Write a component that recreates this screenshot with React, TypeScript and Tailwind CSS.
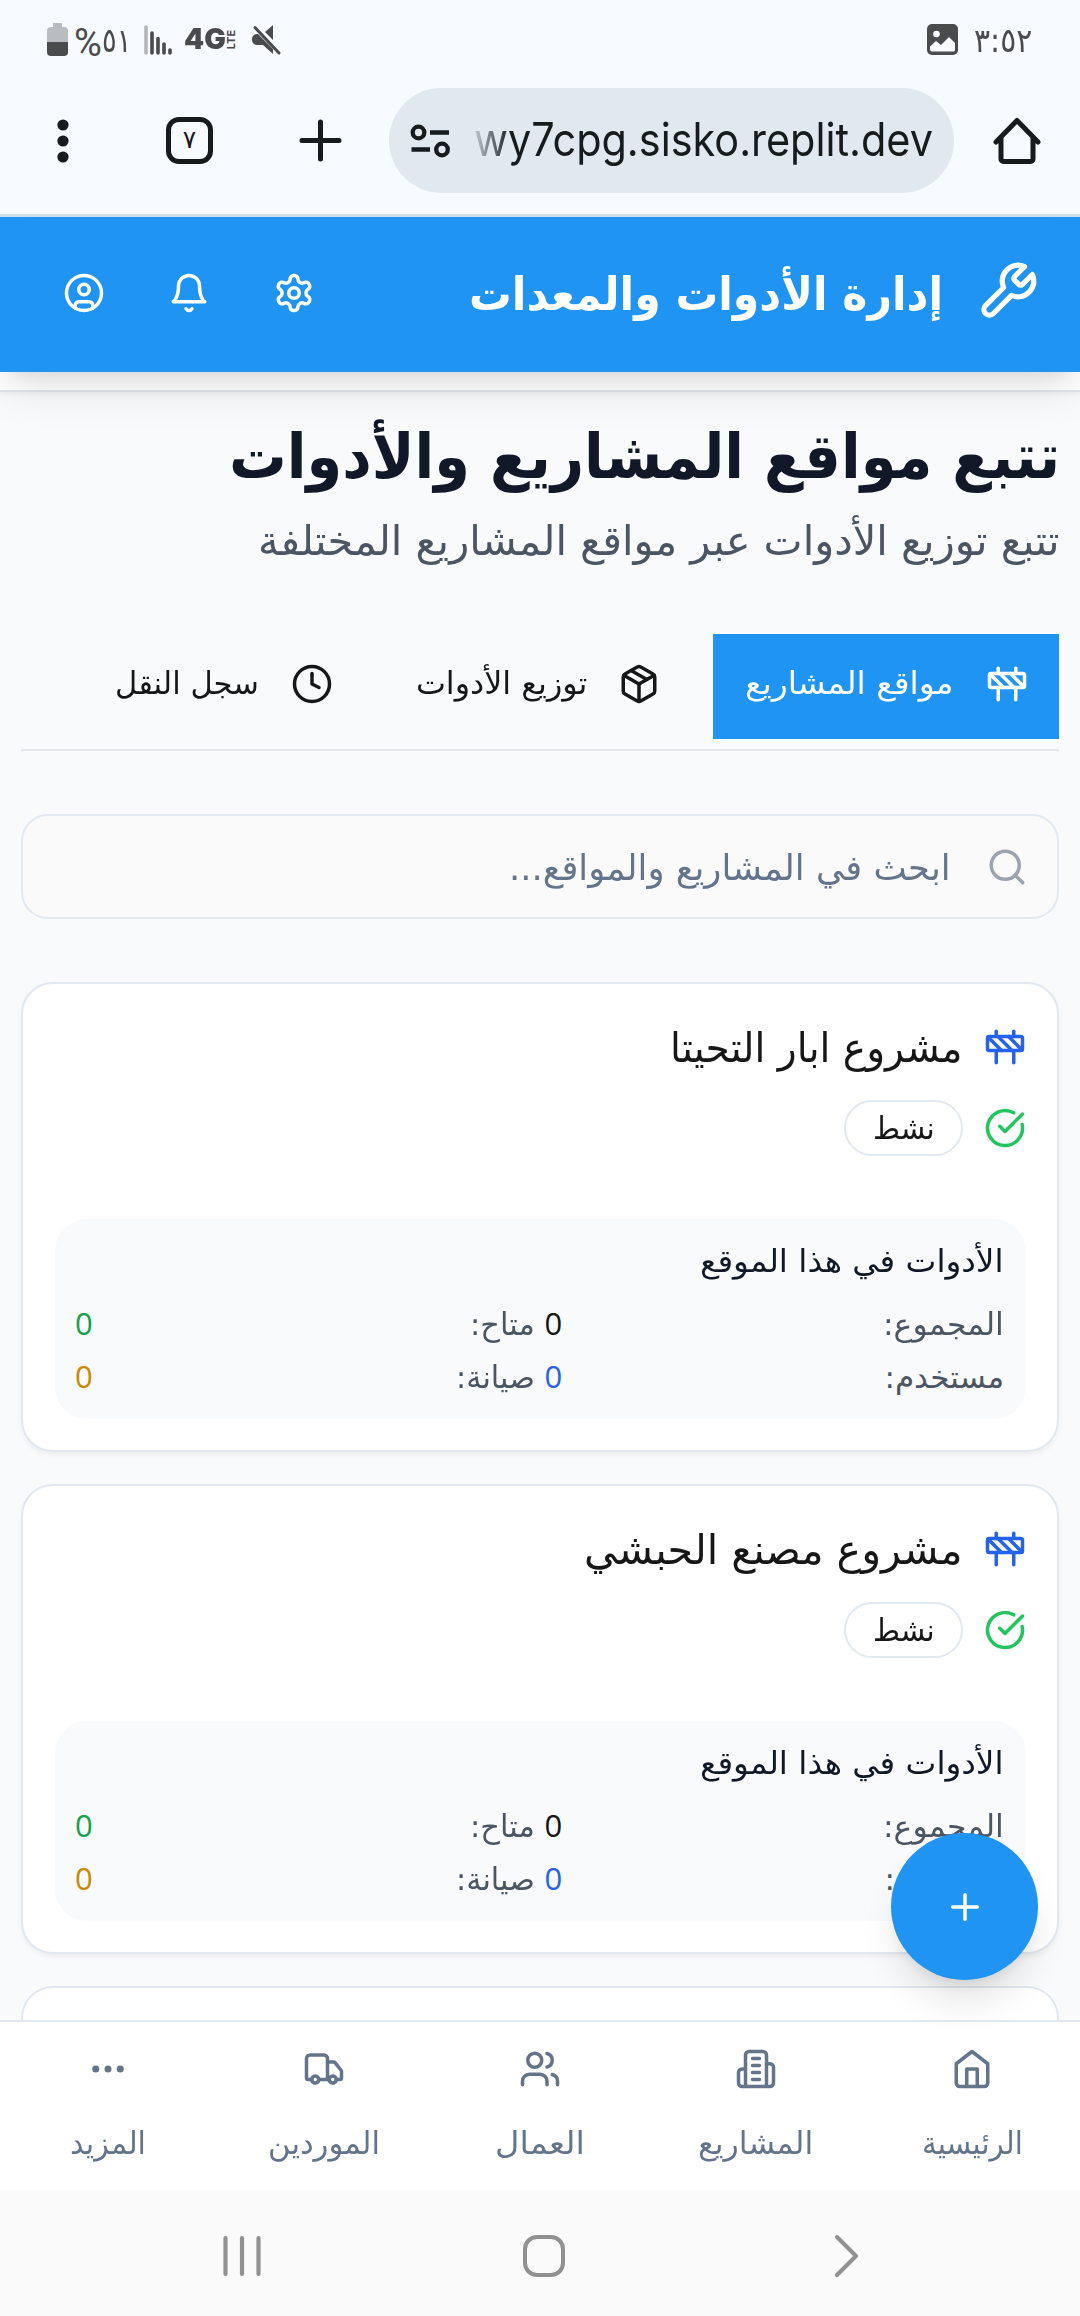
import { useLayoutEffect, useRef, useState } from "react";
import type { ReactNode } from "react";
import { CircleCheckBig, CircleUser, Clock, Construction, Ellipsis, Package, Plus, Search, Truck, Users } from "lucide-react";

/** Single-line label whose text is condensed or widened to fill the box given by className. */
function Fit({ className, children, origin = "origin-right" }: { className: string; children: ReactNode; origin?: string }) {
  const box = useRef<HTMLSpanElement>(null);
  const text = useRef<HTMLSpanElement>(null);
  const [scale, setScale] = useState(1);
  useLayoutEffect(() => {
    if (box.current && text.current) {
      setScale(box.current.clientWidth / text.current.offsetWidth);
    }
  }, []);
  return (
    <span ref={box} className={`flex shrink-0 justify-start leading-none ${className}`}>
      <span ref={text} className={`inline-block shrink-0 whitespace-nowrap ${origin}`} style={{ transform: `scaleX(${scale})` }}>
        {children}
      </span>
    </span>
  );
}

function Svg({ children, className, box = "0 0 24 24", width = 2 }: { children: ReactNode; className: string; box?: string; width?: number }) {
  return (
    <svg viewBox={box} className={className} fill="none" stroke="currentColor" strokeWidth={width} strokeLinecap="round" strokeLinejoin="round">
      {children}
    </svg>
  );
}

function StatusBar() {
  return (
    <div dir="ltr" className="flex h-[74px] items-start pl-[47px] pr-[48px] pt-[23px] text-[#4a4b4d]">
      <svg viewBox="0 0 21 33" className="h-[33px] w-[21px]">
        <path d="M6 0h9v4h2a4 4 0 0 1 4 4v11H0V8a4 4 0 0 1 4-4h2z" fill="#b9bdc2" />
        <path d="M0 19h21v10a4 4 0 0 1-4 4H4a4 4 0 0 1-4-4z" fill="#4a4b4d" />
      </svg>
      <Fit origin="origin-left" className="ml-[6px] mt-[1px] h-9 w-[28px] font-[Roboto] text-[38px]">%</Fit>
      <Fit origin="origin-left" className="mt-[1px] h-8 w-[29px] text-[33px]">٥١</Fit>
      <svg viewBox="0 0 28 30" className="ml-[13px] mt-[2px] h-[30px] w-7" stroke="#4a4b4d" strokeWidth="3.6" strokeLinecap="round">
        <path d="M2 2v26" stroke="#b3b6ba" />
        <path d="M8 8v20M14 13.500v14.500M20 19v9M26 25v3" />
      </svg>
      <Fit origin="origin-left" className="ml-[12px] mt-[2px] h-8 w-[42px] font-[Inter] text-[28px] font-black">4G</Fit>
      <span className="ml-px mt-[6px] flex h-5 w-[10px] items-center justify-center">
        <span className="-rotate-90 font-[Inter] text-[11px] font-bold leading-none">LTE</span>
      </span>
      <svg viewBox="0 0 30 32" className="ml-[14px] mt-px h-8 w-[30px]" fill="#4a4b4d">
        <path d="M22 1v15l-8-8zM22 30 12 21H6a5 5 0 0 1-5-5v-1a5 5 0 0 1 5-5h1l15 15z" />
        <path d="M4 3.500 28 29" stroke="#4a4b4d" strokeWidth="3" strokeLinecap="round" />
      </svg>
      <div className="flex-1" />
      <svg viewBox="0 0 31 31" className="mt-px h-[31px] w-[31px]">
        <rect width="31" height="31" rx="5" fill="#4a4b4d" />
        <circle cx="9.500" cy="10" r="3.300" fill="#f7faff" />
        <path d="M3 22.500 9 17l5 4 8-8 6 6v7q0 1.500-2 1.500H5q-2 0-2-2z" fill="#f7faff" />
      </svg>
      <Fit origin="origin-left" className="ml-[16px] mt-[1px] h-8 w-[58px] text-[33px]">
        <bdo dir="ltr">٣:٥٢</bdo>
      </Fit>
    </div>
  );
}

function BrowserBar() {
  return (
    <div dir="ltr" className="flex h-[143px] items-start border-b-[3px] border-[#d2e0ea] pl-[42px] pr-[38px] pt-[14px] text-[#171b1e]">
      <div className="flex h-[105px] w-[347px] items-center">
        <svg viewBox="0 0 12 44" className="ml-[15px] h-11 w-3" fill="currentColor">
          <circle cx="6" cy="6" r="5.600" />
          <circle cx="6" cy="22" r="5.600" />
          <circle cx="6" cy="38" r="5.600" />
        </svg>
        <div className="ml-[97px] flex h-[47px] w-[47px] items-start justify-center rounded-[13px] border-[5px] border-current pt-[5px] text-[25px] leading-none">٧</div>
        <Svg box="0 0 43 43" width={5} className="ml-[86px] h-[43px] w-[43px]">
          <path d="M21.500 3v37M3 21.500h37" />
        </Svg>
      </div>
      <div className="flex h-[105px] w-[565px] items-center rounded-full bg-[#e1e8f0] pl-[21px]">
        <svg viewBox="0 0 40 34" className="h-[34px] w-10" fill="none" stroke="currentColor" strokeWidth="4.300">
          <circle cx="8.500" cy="8.500" r="5.800" />
          <circle cx="32" cy="25.500" r="5.800" />
          <path d="M20 8.500h19M1.500 25.500H20" />
        </svg>
        <Fit origin="origin-left" className="ml-[24px] h-[58px] w-[459px] pt-[4px] font-[Inter] text-[46px] mask-[linear-gradient(to_right,rgba(0,0,0,0.15),black_8%)]">wy7cpg.sisko.replit.dev</Fit>
      </div>
      <Svg box="0 0 48 48" width={5} className="ml-[39px] mt-[29px] h-12 w-12">
        <path d="M3 25 24 3.500 45 25M8 21v21a2.500 2.500 0 0 0 2.500 2.500h27A2.500 2.500 0 0 0 40 42V21" />
      </Svg>
    </div>
  );
}

function AppHeader() {
  return (
    <header className="z-10 flex h-[155px] shrink-0 items-start bg-[#2094f3] pr-[41px] text-white shadow-[0_26px_39px_-8px_rgba(0,0,0,0.1),0_10px_16px_-10px_rgba(0,0,0,0.1)]">
      <Svg className="mt-[43px] h-[63px] w-[63px]">
        <path d="M14.700 6.300a1 1 0 0 0 0 1.400l1.600 1.600a1 1 0 0 0 1.400 0l3.770-3.770a6 6 0 0 1-7.940 7.940l-6.910 6.910a2.120 2.120 0 0 1-3-3l6.910-6.910a6 6 0 0 1 7.940-7.940l-3.760 3.760z" />
      </Svg>
      <Fit className="mr-[33px] mt-[54px] h-11 w-[474px] text-[46px] font-bold">إدارة الأدوات والمعدات</Fit>
      <div className="mr-[154px] mt-[55px] flex gap-[63px]">
        <Svg className="h-[42px] w-[42px]">
          <path d="M12.220 2h-.44a2 2 0 0 0-2 2v.18a2 2 0 0 1-1 1.730l-.43.25a2 2 0 0 1-2 0l-.15-.08a2 2 0 0 0-2.730.73l-.22.38a2 2 0 0 0 .73 2.730l.15.1a2 2 0 0 1 1 1.720v.51a2 2 0 0 1-1 1.740l-.15.09a2 2 0 0 0-.73 2.730l.22.38a2 2 0 0 0 2.730.73l.15-.08a2 2 0 0 1 2 0l.43.25a2 2 0 0 1 1 1.730V20a2 2 0 0 0 2 2h.44a2 2 0 0 0 2-2v-.18a2 2 0 0 1 1-1.730l.43-.25a2 2 0 0 1 2 0l.15.08a2 2 0 0 0 2.730-.73l.22-.39a2 2 0 0 0-.73-2.730l-.15-.08a2 2 0 0 1-1-1.740v-.5a2 2 0 0 1 1-1.740l.15-.09a2 2 0 0 0 .73-2.730l-.22-.38a2 2 0 0 0-2.730-.73l-.15.08a2 2 0 0 1-2 0l-.43-.25a2 2 0 0 1-1-1.730V4a2 2 0 0 0-2-2z" />
          <circle cx="12" cy="12" r="3" />
        </Svg>
        <Svg className="h-[42px] w-[42px]">
          <path d="M6 8a6 6 0 0 1 12 0c0 7 3 9 3 9H3s3-2 3-9M10.300 21a1.940 1.940 0 0 0 3.400 0" />
        </Svg>
        <CircleUser className="h-[42px] w-[42px]" />
      </div>
    </header>
  );
}

function Tabs() {
  return (
    <div className="mt-[72px] flex h-[117px] shrink-0 border-b-2 border-[#e5e7eb]">
      <div className="flex h-[105px] w-[346px] items-start bg-[#2094f3] pr-[31px] pt-[29px] text-white">
        <Construction className="h-[42px] w-[42px]" />
        <Fit className="mr-[32px] mt-[5px] h-8 w-[209px] text-[31px]">مواقع المشاريع</Fit>
      </div>
      <div className="flex items-start pr-[53px] pt-[29px] text-[#171717]">
        <Package className="h-[42px] w-[42px]" />
        <Fit className="mr-[31px] mt-[5px] h-8 w-[171px] text-[31px]">توزيع الأدوات</Fit>
      </div>
      <div className="flex items-start pr-[83px] pt-[29px] text-[#171717]">
        <Clock className="h-[42px] w-[42px]" />
        <Fit className="mr-[32px] mt-[5px] h-8 w-[144px] text-[31px]">سجل النقل</Fit>
      </div>
    </div>
  );
}

function Stat({ label, width, color }: { label: string; width: string; color: string }) {
  return (
    <div className="flex justify-between">
      <Fit className={`h-[30px] text-[31px] text-[#4b5563] ${width}`}>{label}</Fit>
      <span className={`font-['Open_Sans'] text-[31px] font-medium leading-[29px] ${color}`}>0</span>
    </div>
  );
}

function ProjectCard({ name, width }: { name: string; width: string }) {
  return (
    <article className="h-[470px] shrink-0 rounded-[32px] border-2 border-[#e2e8f0] bg-white pl-8 pr-[31px] pt-[42px] text-[#171717] shadow-[0_3px_5px_rgba(0,0,0,0.05)]">
      <div className="flex h-[42px] items-start">
        <Construction className="h-[42px] w-[42px] text-[#2563eb]" />
        <Fit className={`mr-[21px] mt-[2px] h-10 text-[41px] ${width}`}>{name}</Fit>
      </div>
      <div className="mt-8 flex h-14 items-center">
        <CircleCheckBig className="h-[42px] w-[42px] text-[#22c55e]" />
        <div className="mr-[21px] flex h-14 w-[119px] justify-center rounded-full border-2 border-[#e2e8f0] pt-[11px]">
          <Fit className="h-[30px] w-[62px] text-[31px]">نشط</Fit>
        </div>
      </div>
      <section className="mt-[63px] h-[200px] rounded-[32px] bg-[#f9fafc] pl-[20px] pr-[22px] pt-[27px]">
        <Fit className="h-[30px] w-[304px] text-[31px] text-[#111827]">الأدوات في هذا الموقع</Fit>
        <div className="mt-[33px] grid grid-cols-2 gap-x-[10px] gap-y-[23px]">
          <Stat label="المجموع:" width="w-[121px]" color="text-[#171717]" />
          <Stat label="متاح:" width="w-[65px]" color="text-[#16a34a]" />
          <Stat label="مستخدم:" width="w-[120px]" color="text-[#2563eb]" />
          <Stat label="صيانة:" width="w-[79px]" color="text-[#ca8a04]" />
        </div>
      </section>
    </article>
  );
}

function NavItem({ icon, label, width }: { icon: ReactNode; label: string; width: string }) {
  return (
    <div className="flex flex-1 flex-col items-center">
      {icon}
      <Fit className={`mt-[38px] h-[30px] text-[31px] ${width}`}>{label}</Fit>
    </div>
  );
}

function BottomNav() {
  return (
    <nav className="flex h-[170px] shrink-0 border-t-2 border-[#e2e8f0] bg-white pt-[26px] text-[#64748b]">
      <NavItem
        label="الرئيسية"
        width="w-[101px]"
        icon={
          <Svg className="h-[42px] w-[42px]">
            <path d="m3 9 9-7 9 7v11a2 2 0 0 1-2 2H5a2 2 0 0 1-2-2z" />
            <path d="M9 22V12h6v10" />
          </Svg>
        }
      />
      <NavItem
        label="المشاريع"
        width="w-[115px]"
        icon={
          <Svg className="h-[42px] w-[42px]">
            <path d="M6 22V4a2 2 0 0 1 2-2h8a2 2 0 0 1 2 2v18ZM6 12H4a2 2 0 0 0-2 2v6a2 2 0 0 0 2 2h2M18 9h2a2 2 0 0 1 2 2v9a2 2 0 0 1-2 2h-2M10 6h4M10 10h4M10 14h4M10 18h4" />
          </Svg>
        }
      />
      <NavItem label="العمال" width="w-[90px]" icon={<Users className="h-[42px] w-[42px]" />} />
      <NavItem label="الموردين" width="w-[112px]" icon={<Truck className="h-[42px] w-[42px]" />} />
      <NavItem label="المزيد" width="w-[76px]" icon={<Ellipsis className="h-[42px] w-[42px]" />} />
    </nav>
  );
}

function SystemBar() {
  return (
    <div dir="ltr" className="flex h-[126px] shrink-0 items-start bg-[#fafafa] pl-[222px] pt-[44px] text-[#919191]">
      <Svg box="0 0 40 44" width={4.200} className="h-11 w-10">
        <path d="M3.500 4v36M20 4v36M36.500 4v36" />
      </Svg>
      <Svg box="0 0 44 44" width={4} className="ml-[260px] h-11 w-11">
        <rect x="3" y="3" width="38" height="38" rx="12" />
      </Svg>
      <Svg box="0 0 28 44" width={4} className="ml-[267px] h-11 w-7">
        <path d="M4 3 23 22 4 41" />
      </Svg>
    </div>
  );
}

export default function App() {
  return (
    <div dir="rtl" className="flex h-[2316px] w-[1080px] flex-col overflow-hidden bg-[#f9fafc] font-['DejaVu_Sans',sans-serif]">
      <div className="shrink-0 bg-[#f7faff]">
        <StatusBar />
        <BrowserBar />
      </div>
      <AppHeader />
      <div className="h-5 shrink-0 border-b-2 border-[#e2e5ea] bg-white shadow-[0_3px_5px_rgba(0,0,0,0.04)]" />
      <div className="relative flex h-[1628px] shrink-0 flex-col">
        <main className="flex h-[1628px] flex-col overflow-hidden px-[21px]">
          <Fit className="-mr-[1px] mt-[34px] h-[62px] w-[831px] text-[62px] font-bold text-[#111827]">تتبع مواقع المشاريع والأدوات</Fit>
          <Fit className="mt-[33px] h-[41px] w-[801px] text-[41px] text-[#4b5563]">تتبع توزيع الأدوات عبر مواقع المشاريع المختلفة</Fit>
          <Tabs />
          <div className="mt-[63px] flex h-[105px] shrink-0 items-start rounded-[27px] border-2 border-[#e2e8f0] bg-[#fafafb] pr-[29px] pt-[30px]">
            <Search className="h-[42px] w-[42px] text-[#9ca3af]" />
            <Fit className="mr-[35px] mt-[5px] h-9 w-[442px] text-[35px] text-[#64748b]">ابحث في المشاريع والمواقع...</Fit>
          </div>
          <div className="mt-[63px] flex flex-col gap-8">
            <ProjectCard name="مشروع ابار التحيتا" width="w-[293px]" />
            <ProjectCard name="مشروع مصنع الحبشي" width="w-[379px]" />
            <div className="h-[64px] shrink-0 rounded-t-[32px] border-2 border-b-0 border-[#e2e8f0] bg-white" />
          </div>
        </main>
        <button className="absolute bottom-[40px] right-[42px] flex h-[147px] w-[147px] items-center justify-center rounded-full bg-[#2094f3] text-white shadow-[0_26px_39px_-8px_rgba(0,0,0,0.12),0_10px_16px_-10px_rgba(0,0,0,0.12)]">
          <Plus className="h-[42px] w-[42px]" />
        </button>
      </div>
      <BottomNav />
      <SystemBar />
    </div>
  );
}
